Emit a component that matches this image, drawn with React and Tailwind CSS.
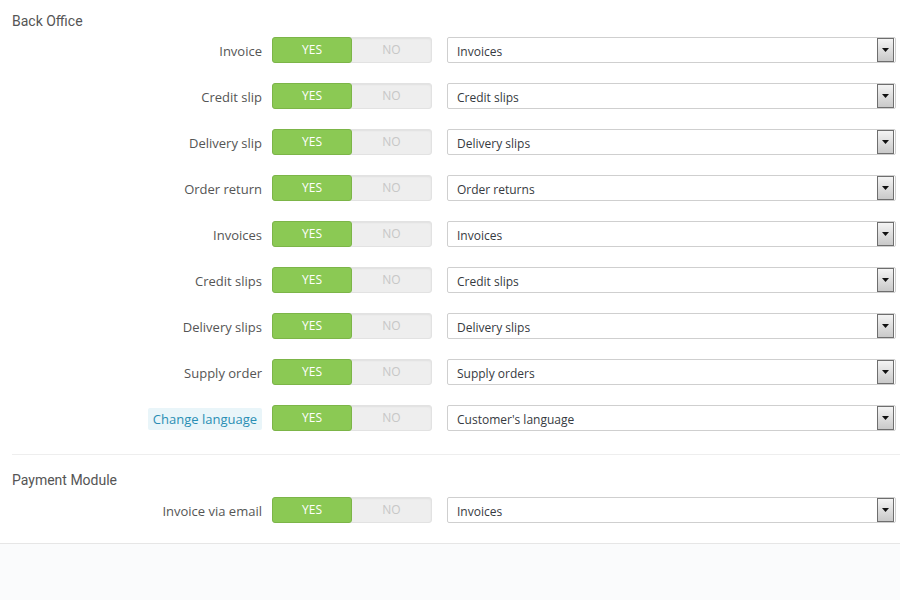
import React from "react";

const backRows = [
  ["Invoice", "Invoices"],
  ["Credit slip", "Credit slips"],
  ["Delivery slip", "Delivery slips"],
  ["Order return", "Order returns"],
  ["Invoices", "Invoices"],
  ["Credit slips", "Credit slips"],
  ["Delivery slips", "Delivery slips"],
  ["Supply order", "Supply orders"],
  ["Change language", "Customer's language", true],
];

function Row({ label, value, hint }) {
  return (
    <div className="flex items-center h-[26px]">
      <div className="w-[262px] flex justify-end pt-[2px]">
        {hint ? (
          <span className="bg-[#e9f5f9] text-[#2a8eb4] text-[13px] leading-[22px] px-[5px] rounded-[2px]">{label}</span>
        ) : (
          <span className="text-[#555] text-[13px] leading-[22px]">{label}</span>
        )}
      </div>
      <div className="ml-[10px] w-[160px] h-[26px] flex rounded-[3px] bg-[#eeeeee] border border-[#e2e2e2] shadow-[inset_0_1px_2px_rgba(0,0,0,0.06)]">
        <div className="w-[80px] -my-px -ml-px h-[26px] rounded-[3px] bg-[#8bc954] border border-[#7cb548] flex items-center justify-center text-white text-[12px]">YES</div>
        <div className="flex-1 flex items-center justify-center text-[#c7c7c7] text-[12px]">NO</div>
      </div>
      <div className="ml-[15px] w-[449px] h-[26px] flex items-center justify-between bg-white border border-[#cfcfcf] rounded-[2px] pl-[9px] pr-px">
        <span className="text-[#363a41] text-[12px] pt-[3px]">{value}</span>
        <div className="w-[17px] h-[24px] border border-[#6e6e6e] bg-gradient-to-b from-[#f4f4f4] to-[#c9c9c9] flex items-center justify-center">
          <svg width="7" height="4" viewBox="0 0 7 4"><path d="M0 0H7L3.5 4Z" fill="#111" /></svg>
        </div>
      </div>
    </div>
  );
}

export default function App() {
  return (
    <div className="w-[900px] h-[600px] bg-[#fafbfc]" style={{ fontFamily: '"Open Sans", "Liberation Sans", sans-serif' }}>
      <div className="bg-white border-b border-[#e6e6e6] pb-[20px]">
        <div className="pl-[12px] pt-[11px] h-[30px] leading-[20px] text-[14px] text-[#555]" style={{ fontFamily: 'Roboto, "Open Sans", sans-serif' }}>Back Office</div>
        <div className="mt-[7px] flex flex-col gap-[20px]">
          {backRows.map((r, i) => (
            <Row key={i} label={r[0]} value={r[1]} hint={r[2]} />
          ))}
        </div>
        <div className="ml-[12px] mt-[23px] border-t border-[#eeeeee]"></div>
        <div className="pl-[12px] mt-[15px] h-[20px] leading-[20px] text-[14px] text-[#555]" style={{ fontFamily: 'Roboto, "Open Sans", sans-serif' }}>Payment Module</div>
        <div className="mt-[7px]">
          <Row label="Invoice via email" value="Invoices" />
        </div>
      </div>
    </div>
  );
}
